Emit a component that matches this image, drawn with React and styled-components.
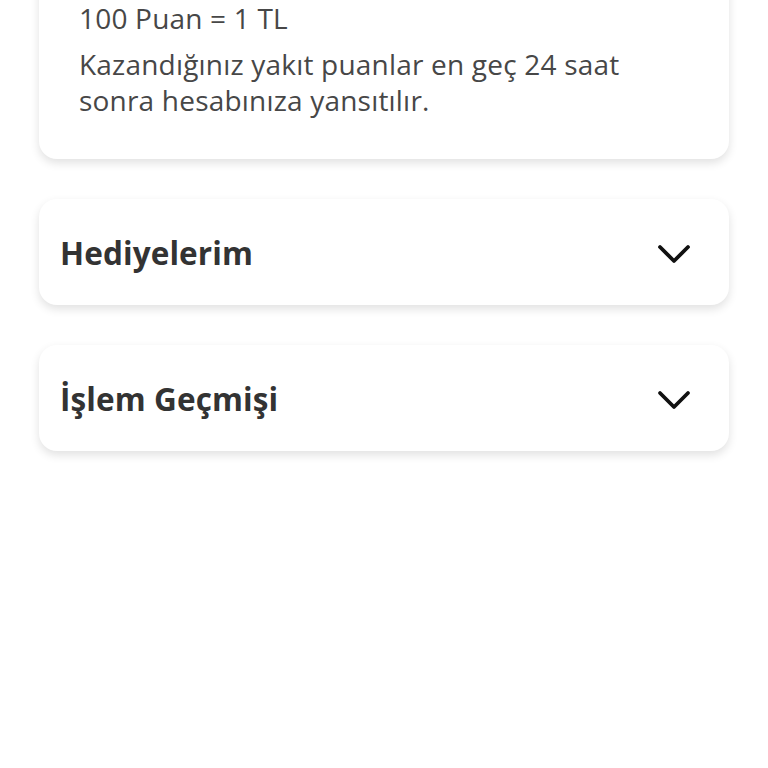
import React from 'react';
import styled, { createGlobalStyle } from 'styled-components';

const GlobalStyle = createGlobalStyle`
  html, body {
    margin: 0;
    padding: 0;
    background: #fff;
    font-family: "Open Sans", "Noto Sans", sans-serif;
  }
`;

const Page = styled.div`
  width: 768px;
  height: 768px;
  overflow: hidden;
  box-sizing: border-box;
  padding: 0 39px;
  display: flex;
  flex-direction: column;
  gap: 40px;
`;

const InfoCard = styled.div`
  margin-top: -60px;
  background: #fff;
  border-radius: 18px;
  box-shadow: 0 4px 10px rgba(0, 0, 0, 0.12);
  padding: 60px 40px 41px;
`;

const InfoLine = styled.p`
  margin: 0 0 ${(p) => p.gap || 0}px;
  font-size: 28px;
  line-height: 36px;
  letter-spacing: 0.2px;
  color: #474747;
`;

const Accordion = styled.div`
  height: 106px;
  background: #fff;
  border-radius: 18px;
  box-shadow: 0 4px 10px rgba(0, 0, 0, 0.12);
  display: flex;
  align-items: center;
  justify-content: space-between;
  padding: 0 38px 0 21px;
  box-sizing: border-box;
`;

const Title = styled.span`
  font-size: 31.5px;
  font-weight: 700;
  letter-spacing: 0.1px;
  color: #333;
`;

const Chevron = () => (
  <svg width="34" height="22" viewBox="0 0 34 22" fill="none" style={{ marginTop: 4 }}>
    <path d="M3 4 L17 18 L31 4" stroke="#111" strokeWidth="3.8" strokeLinecap="round" strokeLinejoin="round" />
  </svg>
);

export default function App() {
  return (
    <>
      <GlobalStyle />
      <Page>
        <InfoCard>
          <InfoLine gap={10}>100 Puan = 1 TL</InfoLine>
          <InfoLine>Kazandığınız yakıt puanlar en geç 24 saat sonra hesabınıza yansıtılır.</InfoLine>
        </InfoCard>
        <Accordion>
          <Title>Hediyelerim</Title>
          <Chevron />
        </Accordion>
        <Accordion>
          <Title>İşlem Geçmişi</Title>
          <Chevron />
        </Accordion>
      </Page>
    </>
  );
}
